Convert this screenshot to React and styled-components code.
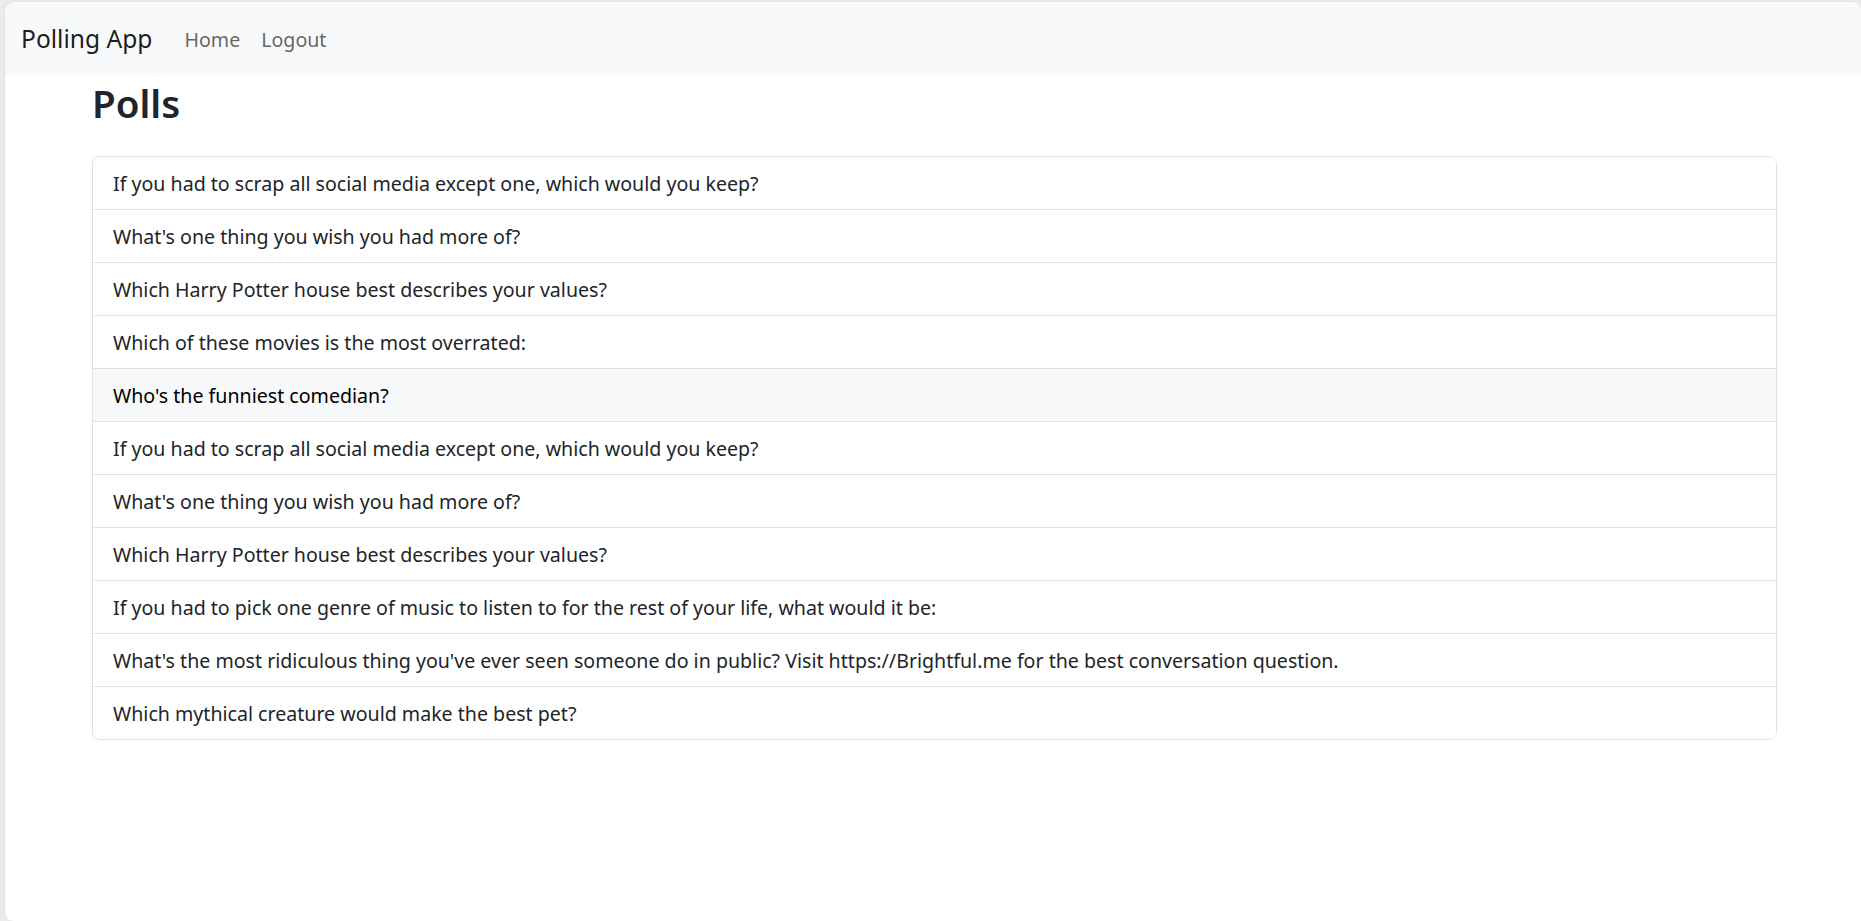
import React from "react";
import styled, { createGlobalStyle } from "styled-components";

const GlobalStyle = createGlobalStyle`
  html, body {
    margin: 0;
    padding: 0;
    background: #ebebeb;
  }
  body {
    font-family: "Noto Sans", "Open Sans", "Liberation Sans", sans-serif;
    color: #212529;
    -webkit-font-smoothing: antialiased;
  }
  * { box-sizing: border-box; }
`;

const Frame = styled.div`
  margin: 2px 0 0 5px;
  min-height: calc(100vh - 2px);
  background: #ffffff;
  border-radius: 9px 9px 0 9px;
  overflow: hidden;
  box-shadow: -1px -1px 0 #e2e2e2;
`;

const Navbar = styled.nav`
  height: 73px;
  background: #f8f9fa;
  display: flex;
  align-items: center;
  padding: 2px 16px 0;
`;

const Brand = styled.a`
  font-size: 24.6px;
  color: rgba(0, 0, 0, 0.9);
  text-decoration: none;
  margin-right: 32px;
  line-height: 1;
`;

const NavList = styled.div`
  display: flex;
  align-items: center;
  gap: 21px;
`;

const NavLink = styled.a`
  font-size: 19.6px;
  color: rgba(0, 0, 0, 0.62);
  text-decoration: none;
  line-height: 1;
`;

const Container = styled.main`
  padding: 0 84px 0 87px;
`;

const Title = styled.h1`
  margin: 0;
  padding: 4px 0 0 0;
  height: 81px;
  font-size: 38.5px;
  font-weight: 600;
  line-height: 48px;
  color: #212529;
`;

const List = styled.ul`
  list-style: none;
  margin: 0;
  padding: 0;
  border: 1px solid #dee2e6;
  border-radius: 8px;
  overflow: hidden;
`;

const Item = styled.li`
  height: 53px;
  display: flex;
  align-items: center;
  padding: 1px 20px 0;
  font-size: 19.6px;
  background: ${(p) => (p.$active ? "#f8f9fa" : "#ffffff")};
  color: ${(p) => (p.$active ? "#000000" : "#212529")};
  & + & {
    border-top: 1px solid #dee2e6;
  }
  &:first-child {
    height: 52px;
  }
`;

const polls = [
  "If you had to scrap all social media except one, which would you keep?",
  "What's one thing you wish you had more of?",
  "Which Harry Potter house best describes your values?",
  "Which of these movies is the most overrated:",
  "Who's the funniest comedian?",
  "If you had to scrap all social media except one, which would you keep?",
  "What's one thing you wish you had more of?",
  "Which Harry Potter house best describes your values?",
  "If you had to pick one genre of music to listen to for the rest of your life, what would it be:",
  "What's the most ridiculous thing you've ever seen someone do in public? Visit https://Brightful.me for the best conversation question.",
  "Which mythical creature would make the best pet?",
];

export default function App() {
  return (
    <>
      <GlobalStyle />
      <Frame>
        <Navbar>
          <Brand href="#">Polling App</Brand>
          <NavList>
            <NavLink href="#">Home</NavLink>
            <NavLink href="#">Logout</NavLink>
          </NavList>
        </Navbar>
        <Container>
          <Title>Polls</Title>
          <List>
            {polls.map((q, i) => (
              <Item key={i} $active={i === 4}>
                {q}
              </Item>
            ))}
          </List>
        </Container>
      </Frame>
    </>
  );
}
